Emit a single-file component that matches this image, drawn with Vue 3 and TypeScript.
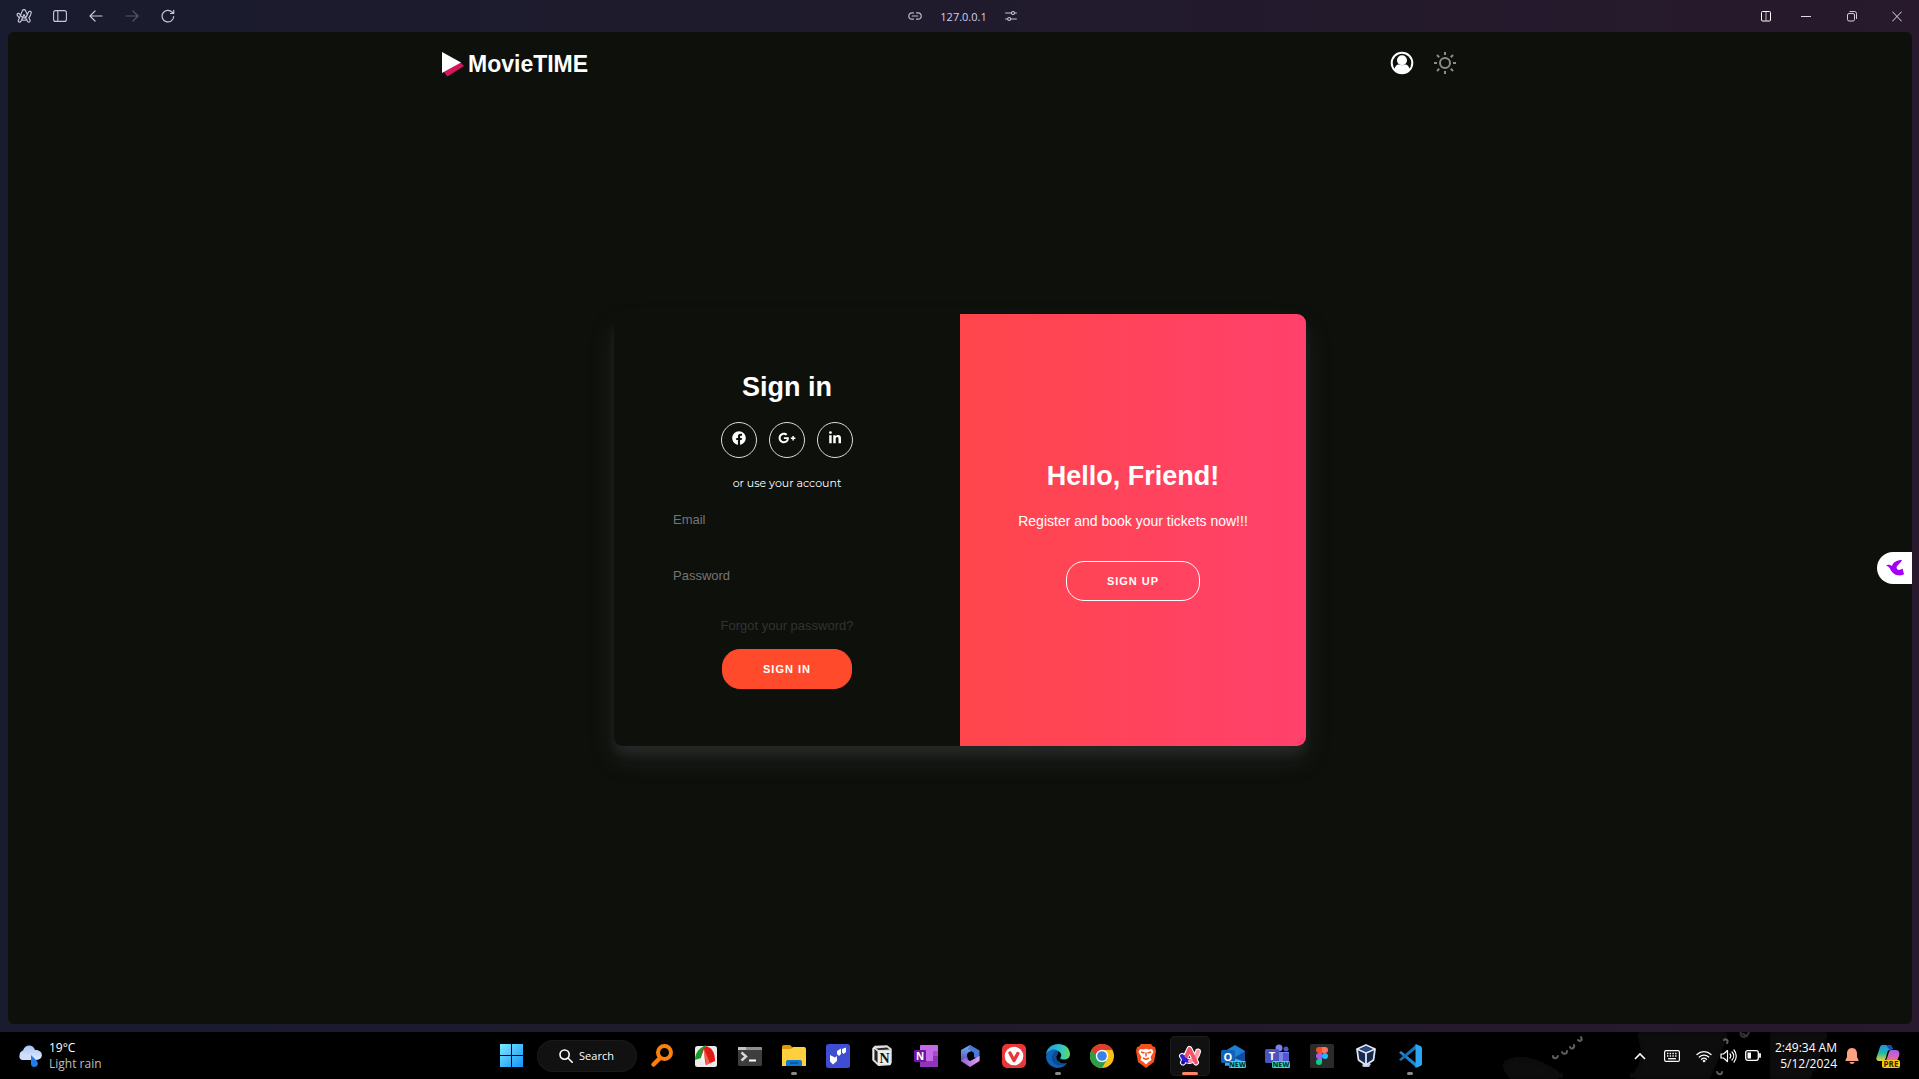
<script setup lang="ts">
import { ref } from 'vue'

const email = ref('')
const password = ref('')
const time = ref('2:49:34 AM')
const date = ref('5/12/2024')
</script>

<template>
  <div class="desktop">
    <header class="titlebar">
      <div class="tools">
        <button class="tool" aria-label="Arc menu">
          <svg width="16" height="14" viewBox="0 0 16 14" fill="none" stroke="#c9c8dc" stroke-width="1.1" stroke-linejoin="round" stroke-linecap="round">
            <path d="M6.500 1.500C7 .3 9 .3 9.500 1.500l1.800 4.200L12.500 3c.6-1.300 3-.7 2.700.8-.4 1.900-1.200 3.500-2.300 4.900l1.200 2.600c.5 1.500-1.700 2.500-2.500 1.100l-.9-1.700c-1.600.6-3.500.6-5 0l-.9 1.700c-.9 1.400-3 .4-2.500-1.100l1.100-2.400C2.500 8 1.800 7.100 1.200 6.100.6 4.700 2.600 3.700 3.500 4.900l1 1.400z" />
            <path d="M4.500 6.300 3.400 8.900M5.700 10.700l1-2.100M9.600 8.600l1.100 2.100M11.300 5.700c-.4 1.100-1 2-1.700 2.900-1 .3-2 .3-2.900 0L8 5.500l1.600 3.100M4.500 6.300c.6 1 1.300 1.800 2.200 2.300" />
          </svg>
        </button>
        <button class="tool" aria-label="Toggle sidebar">
          <svg width="14" height="12" viewBox="0 0 14 12" fill="none" stroke="#c6c5dd" stroke-width="1.100"><rect x=".6" y=".6" width="12.800" height="10.800" rx="2" /><path d="M4.800 1v10" /></svg>
        </button>
        <button class="tool" aria-label="Back">
          <svg width="14" height="12" viewBox="0 0 14 12" fill="none" stroke="#c6c5dd" stroke-width="1.200" stroke-linecap="round" stroke-linejoin="round"><path d="M13 6H1M6 1 1 6l5 5" /></svg>
        </button>
        <button class="tool" aria-label="Forward" disabled>
          <svg width="14" height="12" viewBox="0 0 14 12" fill="none" stroke="#56556a" stroke-width="1.200" stroke-linecap="round" stroke-linejoin="round"><path d="M1 6h12M8 1l5 5-5 5" /></svg>
        </button>
        <button class="tool" aria-label="Reload">
          <svg width="14" height="14" viewBox="0 0 14 14" fill="none" stroke="#c6c5dd" stroke-width="1.200" stroke-linecap="round" stroke-linejoin="round"><path d="M12.700 7.500A5.800 5.800 0 1 1 11 3l1.500 1.300M12.700 1.300v3.200H9.500" /></svg>
        </button>
      </div>
      <div class="address">
        <svg width="14" height="8" viewBox="0 0 14 8" fill="none" stroke="#b9b7cf" stroke-width="1.200" stroke-linecap="round"><path d="M5.500 .8H4a3.200 3.200 0 0 0 0 6.400h1.500M8.500 .8H10a3.200 3.200 0 0 1 0 6.400H8.500M4.200 4h5.600" /></svg>
        <span>127.0.0.1</span>
        <svg width="12" height="12" viewBox="0 0 12 12" fill="none" stroke="#c6c5dd" stroke-width="1.100" stroke-linecap="round"><path d="M.6 3h5.800M9.600 3h1.800M.6 9h2M5.800 9h5.600" /><circle cx="8" cy="3" r="1.500" /><circle cx="4.200" cy="9" r="1.500" /></svg>
      </div>
      <div class="window-buttons">
        <button class="split" aria-label="Split view">
          <svg width="10" height="11" viewBox="0 0 10 11" fill="none" stroke="#fff"><rect x=".5" y=".5" width="9" height="9.500" rx="1" /><path d="M5 1v9" stroke="#bbb" /></svg>
        </button>
        <button aria-label="Minimize"><svg width="10" height="11" viewBox="0 0 10 11"><path d="M0 5.500h10" stroke="#dcd9ef" /></svg></button>
        <button aria-label="Restore"><svg width="10" height="11" viewBox="0 0 10 11" fill="none" stroke="#cfcce2"><rect x=".5" y="2.500" width="7" height="7.500" rx="1.500" /><path d="M2.500 .5H7.500a2 2 0 0 1 2 2v5.500" /></svg></button>
        <button aria-label="Close"><svg width="10" height="11" viewBox="0 0 10 11"><path d="M.3 .6l9.400 9.800M9.700 .6.3 10.400" stroke="#dcd9ef" /></svg></button>
      </div>
    </header>

    <div class="page">
      <nav class="nav">
        <a class="brand" href="#">
          <svg width="22" height="26" viewBox="0 0 22 26"><path d="M2 21 18.500 11.500 22 15 5.500 25.500z" fill="#d9145f" /><path d="M0 1v21l19-10.500z" fill="#fff" /></svg>
          <span>MovieTIME</span>
        </a>
        <div class="nav-actions">
          <button aria-label="Account">
            <svg width="24" height="24" viewBox="0 0 24 24"><circle cx="12" cy="12" r="10.300" fill="none" stroke="#fff" stroke-width="2" /><circle cx="12" cy="9.300" r="5" fill="#fff" /><path d="M4.500 19c0-3.500 2.200-5.500 4.600-5.500 1.700 1.100 4.100 1.100 5.800 0 2.400 0 4.600 2 4.600 5.500-4 4.200-11 4.200-15 0z" fill="#fff" /></svg>
          </button>
          <button aria-label="Toggle theme">
            <svg width="22" height="22" viewBox="0 0 22 22" fill="none" stroke="#8b8d8a" stroke-width="2"><circle cx="11" cy="11" r="5" /><path d="M11 0v3M11 19v3M0 11h3M19 11h3M3 3l2.200 2.200M16.800 16.800 19 19M19 3l-2.200 2.200M5.200 16.800 3 19" /></svg>
          </button>
        </div>
      </nav>

      <main class="content">
        <div class="card">
          <form class="sign-in" @submit.prevent>
            <h1>Sign in</h1>
            <div class="social">
              <a href="#" aria-label="Facebook"><svg width="14" height="14" viewBox="0 0 512 512" fill="#fff"><path d="M504 256C504 119 393 8 256 8S8 119 8 256c0 123.780 90.690 226.380 209.250 245V327.690h-63V256h63v-54.640c0-62.150 37-96.480 93.670-96.480 27.140 0 55.520 4.840 55.520 4.840v61h-31.280c-30.800 0-40.410 19.120-40.410 38.730V256h68.780l-11 71.690h-57.780V501C413.310 482.380 504 379.780 504 256z" /></svg></a>
              <a href="#" aria-label="Google Plus"><svg width="18" height="14" viewBox="0 0 640 512" fill="#fff"><path d="M386.061 228.496c1.834 9.692 3.143 19.384 3.143 31.956C389.204 370.205 315.599 448 204.800 448c-106.084 0-192-85.915-192-192s85.916-192 192-192c51.864 0 95.083 18.859 128.611 50.292l-52.126 50.030c-14.145-13.621-39.028-29.599-76.485-29.599-65.484 0-118.920 54.221-118.920 121.277 0 67.056 53.436 121.277 118.920 121.277 75.961 0 104.513-54.745 108.965-82.773H204.800v-66.009h181.261zm185.406 6.437V179.200h-56.001v55.733h-55.733v56.001h55.733v55.733h56.001v-55.733H627.200v-56.001h-55.733z" /></svg></a>
              <a href="#" aria-label="LinkedIn"><svg width="12" height="14" viewBox="0 0 448 512" fill="#fff"><path d="M100.280 448H7.400V148.900h92.880zM53.790 108.100C24.090 108.100 0 83.500 0 53.800a53.790 53.790 0 0 1 107.580 0c0 29.700-24.100 54.300-53.790 54.300zM447.900 448h-92.680V302.400c0-34.700-.7-79.200-48.290-79.200-48.290 0-55.690 37.700-55.690 76.700V448h-92.780V148.900h89.080v40.800h1.300c12.400-23.500 42.690-48.300 87.880-48.300 94 0 111.280 61.900 111.280 142.300V448z" /></svg></a>
            </div>
            <span class="hint">or use your account</span>
            <input v-model="email" type="email" placeholder="Email" aria-label="Email" />
            <input v-model="password" type="password" placeholder="Password" aria-label="Password" />
            <a class="forgot" href="#">Forgot your password?</a>
            <button class="pill solid">SIGN IN</button>
          </form>
          <section class="welcome">
            <h1>Hello, Friend!</h1>
            <p>Register and book your tickets now!!!</p>
            <button class="pill ghost">SIGN UP</button>
          </section>
        </div>
      </main>

      <button class="side-tab" aria-label="Open extension">
        <svg width="18" height="16" viewBox="0 0 18 16" fill="#a200f4"><path d="M0 5.500C2 4 4.500 4.700 6 6c1-3.600 4.500-6 10-6-.8 2.500-3.500 4.400-5 6.200-1 1.500-.2 3.500 1.800 3.800 1.400.1 2.700-.8 3.700-1.500l1.500 5.500c-1.200 1.300-3.500 1.600-6 1.300C8 14.800 5 11.500 4 8.500 3 7 1.500 5.800 0 5.500z" /></svg>
      </button>
    </div>

    <footer class="taskbar">
      <svg class="wallpaper" width="419" height="47" viewBox="0 0 419 47" fill="none" aria-hidden="true">
        <defs>
          <filter id="soft" x="-50%" y="-50%" width="200%" height="200%"><feGaussianBlur stdDeviation="5" /></filter>
        </defs>
        <g filter="url(#soft)">
          <path d="M0 32c20-15 40-4 60 8 25 6 50 3 75 0V47H10z" fill="#111010" />
          <path d="M135 0c10 20 8 35-10 47h85l20-47z" fill="#0c0b0c" />
          <path d="M270 0h60l-20 47h-40z" fill="#100f10" />
        </g>
        <g stroke="#5f5f5f" stroke-width="2" stroke-linecap="round">
          <path d="M53 24c0 3 4 3 5 0M62 20c1 3 5 2 5-1M70 15c1 3 5 1 4-2M78 8c2 2 5 0 3-3M224 8c2-2 5 1 3 3M217 40c1 3 5 3 5 0" />
          <path d="M241 0c-2 5 5 8 8 0M243 2l4 2" stroke="#333" />
        </g>
      </svg>

      <button class="weather">
        <svg width="24" height="22" viewBox="0 0 24 22">
          <defs><linearGradient id="cloud" x2="0" y2="1"><stop stop-color="#a9c4f5" /><stop offset="1" stop-color="#e3ecfd" /></linearGradient></defs>
          <path d="M5 15a5 5 0 0 1 0-9.500C7-1 15-1 17 5c9-.5 9 10 1 10z" fill="url(#cloud)" />
          <path d="M1.500 12c0-4 6-5 8-1 2-1 4 1 3 4H5c-2 0-3.500-1-3.500-3z" fill="#cfdffb" />
          <path d="M13 10c3 3 7 6 7 9-1 4-7 4-7 0z" fill="#1f7df2" />
        </svg>
        <span class="lines"><b>19°C</b><span>Light rain</span></span>
      </button>

      <div class="apps">
        <button class="app" aria-label="Start">
          <svg width="23" height="23" viewBox="0 0 23 23"><defs><linearGradient id="win" x2="1" y2="1"><stop stop-color="#7de9ff" /><stop offset="1" stop-color="#0f93f8" /></linearGradient></defs><path d="M0 0h11v11H0zM12 0h11v11H12zM0 12h11v11H0zM12 12h11v11H12z" fill="url(#win)" /></svg>
        </button>
        <button class="search">
          <svg width="14" height="14" viewBox="0 0 14 14" fill="none" stroke="#fff" stroke-width="1.600" stroke-linecap="round"><circle cx="5.600" cy="5.600" r="4.600" /><path d="m9.200 9.200 4 4" /></svg>
          <span>Search</span>
        </button>
        <button class="app" aria-label="Everything">
          <svg width="24" height="24" viewBox="0 0 24 24" fill="none" stroke="#ff7f0a"><circle cx="14.500" cy="8.500" r="6.500" stroke-width="4" /><path d="M10 14 3.500 20.500" stroke-width="4.500" stroke-linecap="round" /></svg>
        </button>
        <button class="app" aria-label="FastStone Capture">
          <svg width="24" height="24" viewBox="0 0 24 24"><rect x="1" y="2" width="22" height="21" rx="2.500" fill="#ececec" /><path d="M12 1C5 4 1 9 1 16l6-2 3-8z" fill="#1c9a29" /><path d="M12 2c7 2 9 8 9 15l-9 4-4-14z" fill="#e01a14" /><path d="m10 5 2 16 4-2z" fill="#f56050" /><path d="M10 5 7 14l4 6z" fill="#f8f8f8" /></svg>
        </button>
        <button class="app" aria-label="Terminal">
          <svg width="24" height="20" viewBox="0 0 24 20"><rect width="24" height="19" y="1" rx="1.500" fill="#3d3e40" /><path d="M0 4V2a1 1 0 0 1 1-1h22a1 1 0 0 1 1 1v2z" fill="#8d8f92" /><path d="M0 4V2a1 1 0 0 1 1-1h7v3z" fill="#c3c4c6" /><path d="m3.500 6.500 4.500 4-4.500 4" fill="none" stroke="#d8d8d8" stroke-width="2.400" /><path d="M11 14.500h7" stroke="#fff" stroke-width="2" /></svg>
        </button>
        <button class="app running" aria-label="File Explorer">
          <svg width="24" height="21" viewBox="0 0 24 21"><path d="M0 2a2 2 0 0 1 2-2h6l3 3v5H0z" fill="#dd9a08" /><path d="M0 4h9l2-2h11a2 2 0 0 1 2 2v17H0z" fill="#ffcf3f" /><path d="M4 21v-4a2 2 0 0 1 2-2h12a2 2 0 0 1 2 2v4z" fill="#1277d1" /><path d="M8 18h8" stroke="#0a4f94" stroke-width="1.500" /></svg>
        </button>
        <button class="app" aria-label="Metro app">
          <svg width="24" height="24" viewBox="0 0 24 24"><rect width="24" height="24" rx="2.500" fill="#3e4dd1" /><path d="m4 11 5 2.500L11 12v5l-4 3.500-3-3zM11 7l4-2.500V10l-2 2-2-2zM16 5l4-1.500V8l-2.500 2L16 8.500z" fill="#fff" /></svg>
        </button>
        <button class="app" aria-label="Notion">
          <svg width="20" height="21" viewBox="0 0 20 21"><path d="M1 3.500 3 1.500 15 1l4 3v13.500l-1 2-11.500.8L1 15z" fill="#ddd" stroke="#ddd" stroke-width="1.500" stroke-linejoin="round" /><path d="m2 3 4 3.500v12.500L2 14.500z" fill="#222" stroke="#fff" stroke-width=".8" /><path d="M4 3.500 15 2.500l2.500 2L6.500 5z" fill="#222" /><rect x="6.500" y="6" width="12" height="13.500" fill="#eee" /><text x="12.500" y="17.500" text-anchor="middle" font-family="Liberation Serif, serif" font-size="14" font-weight="700" fill="#111">N</text></svg>
        </button>
        <button class="app" aria-label="OneNote">
          <svg width="24" height="22" viewBox="0 0 24 22"><rect x="6" width="18" height="22" rx="1" fill="#c56ae6" /><path d="M19 6h5v5h-5z" fill="#a94bd0" /><path d="M19 11h5v5h-5z" fill="#8a33b4" /><path d="M6 16h18v5a1 1 0 0 1-1 1H7a1 1 0 0 1-1-1z" fill="#9133bd" /><rect y="5" width="12" height="12" rx="1" fill="#6f17a3" /><text x="6" y="15" text-anchor="middle" font-family="Open Sans, sans-serif" font-size="10" font-weight="700" fill="#fff">N</text></svg>
        </button>
        <button class="app" aria-label="Microsoft 365">
          <svg width="22" height="24" viewBox="0 0 22 24"><defs><linearGradient id="m1" x2="0" y2="1"><stop stop-color="#6fb8f5" /><stop offset="1" stop-color="#5a3fae" /></linearGradient><linearGradient id="m2"><stop stop-color="#8f5fd8" /><stop offset="1" stop-color="#e5a0f0" /></linearGradient></defs><path d="M11 1 2 6v11l3 2 4-4V9l5-3z" fill="url(#m1)" /><path d="m11 1 9.500 5.500V16L15 13V9L9 5z" fill="#4a78d8" /><path d="M2 17l9 6 9.500-6v-5L11 17l-5-3z" fill="url(#m2)" /><circle cx="11.500" cy="11.500" r="3.500" fill="#000" /></svg>
        </button>
        <button class="app" aria-label="Vivaldi">
          <svg width="24" height="24" viewBox="0 0 24 24"><rect width="24" height="24" rx="5" fill="#ea3639" /><circle cx="12" cy="12" r="9.300" fill="#fff" /><path d="m8 9 4 7.500 3.800-7" fill="none" stroke="#ea3639" stroke-width="3.400" stroke-linecap="round" stroke-linejoin="round" /></svg>
        </button>
        <button class="app running" aria-label="Edge">
          <svg width="24" height="24" viewBox="0 0 24 24"><defs><linearGradient id="e1"><stop stop-color="#1b9de2" /><stop offset=".6" stop-color="#2fc3c9" /><stop offset="1" stop-color="#5fdc5a" /></linearGradient></defs><path d="M0 11C1-4 24-3 24 10c0 5-5 6.500-9 5-2-1 1-2 0-5C13 5 3 5 0 11z" fill="url(#e1)" /><path d="M0 12C2 5 9 4 12 7c-4 0-5 4-4 8 1 4 6 7 13 4-6 9-21 5-21-7z" fill="#1064b8" /><path d="M12 7c-5 0-8 6-5 11 3 5 10 4 14 1-5 1-10-1-10.500-5-.3-3 1.500-3.500 1.500-4z" fill="#0b4c93" /></svg>
        </button>
        <button class="app" aria-label="Chrome">
          <svg width="24" height="24" viewBox="0 0 24 24"><circle cx="12" cy="12" r="12" fill="#fbc116" /><path d="M1.600 6A12 12 0 0 1 22.400 6H12L7 15z" fill="#e33b2e" /><path d="M1.600 6A12 12 0 0 0 12 24l5.200-9-5.200-3H6.800z" fill="#2b9e48" /><circle cx="12" cy="12" r="6.200" fill="#fff" /><circle cx="12" cy="12" r="4.800" fill="#3f7fe8" /></svg>
        </button>
        <button class="app" aria-label="Brave">
          <svg width="20" height="24" viewBox="0 0 20 24"><path d="M5 0h10l2 2.500 2 .5 1 4-2 11-8 6-8-6L0 7l1-4 2-.5z" fill="#f4511e" /><path d="m4 5 3 .5 3-.8 3 .8 3-.5 1.500 3-3 5 1 3-3 2-2.500 2.500L7.500 18l-3-2 1-3-3-5z" fill="#fff" /><path d="m5 8 3.500 1M15 8l-3.500 1M10 8.500v4M7 14l3 1.500 3-1.500" stroke="#f4511e" stroke-width="1.500" fill="none" /></svg>
        </button>
        <button class="app active" aria-label="Arc">
          <svg width="24" height="22" viewBox="0 0 24 22" stroke-linecap="round" stroke-linejoin="round" fill="none"><path d="M5 17.500 11.500 4 18 17.500M4 11c2 3.500 4.500 5 7.500 5 4.500-.5 7.500-5 8.500-9.500" stroke="#fff" stroke-width="6" /><path d="M5 17.500 7.500 12" stroke="#1908a8" stroke-width="4" /><path d="M4 11c2 3.500 4.500 5 7.500 5" stroke="#2b1fd8" stroke-width="4" /><path d="M12 16c4-.8 7-5 8-9.500" stroke="#fb9aa4" stroke-width="4" /><path d="m8.500 11 3-7L18 17.500" stroke="#f4516c" stroke-width="4" /></svg>
        </button>
        <button class="app" aria-label="Outlook">
          <svg width="25" height="24" viewBox="0 0 25 24"><path d="M4 7 14 1l10 6v15H4z" fill="#1e7fd6" /><path d="m4 9 10 5 10-7v14H4z" fill="#43a5ee" /><path d="m13 14 11-7v11z" fill="#0d4f9e" /><rect y="6" width="14" height="13" rx="1.500" fill="#0f62b8" /><text x="7" y="16.500" text-anchor="middle" font-family="Open Sans, sans-serif" font-size="11" font-weight="700" fill="#fff">O</text><rect x="8" y="17" width="17" height="7" rx="1.500" fill="#33dedb" /><text x="16.500" y="23" text-anchor="middle" font-family="Open Sans, sans-serif" font-size="7" font-weight="800" fill="#06383d">NEW</text></svg>
        </button>
        <button class="app" aria-label="Teams">
          <svg width="25" height="24" viewBox="0 0 25 24"><circle cx="14" cy="4" r="3.500" fill="#7b83eb" /><circle cx="21" cy="5" r="2.500" fill="#5059c9" /><path d="M10 8h14v12H10z" fill="#7b83eb" /><path d="M18 9h6v10h-6z" fill="#5059c9" /><rect y="5" width="14" height="14" rx="1.500" fill="#4b53bc" /><text x="7" y="16" text-anchor="middle" font-family="Open Sans, sans-serif" font-size="11" font-weight="700" fill="#fff">T</text><rect x="7" y="17" width="18" height="7" rx="1.500" fill="#33dedb" /><text x="16" y="23" text-anchor="middle" font-family="Open Sans, sans-serif" font-size="7" font-weight="800" fill="#06383d">NEW</text></svg>
        </button>
        <button class="app" aria-label="Figma">
          <svg width="24" height="24" viewBox="0 0 24 24"><rect width="24" height="24" rx="1.500" fill="#2b2b2b" /><path d="M12 3H9a3 3 0 0 0 0 6h3z" fill="#f24e1e" /><path d="M12 3h3a3 3 0 0 1 0 6h-3z" fill="#ff7262" /><path d="M12 9H9a3 3 0 0 0 0 6h3z" fill="#a259ff" /><circle cx="15" cy="12" r="3" fill="#1abcfe" /><path d="M12 15H9a3 3 0 1 0 3 3z" fill="#0acf83" /></svg>
        </button>
        <button class="app" aria-label="VirtualBox">
          <svg width="22" height="24" viewBox="0 0 22 24" stroke-linejoin="round"><path d="m7 21 4-3 5 2-2 3H8z" fill="#b9c3da" /><path d="m11 1 9 4-1.500 11L11 21l-7.500-5L2 5z" fill="#16294f" stroke="#dfe6f4" stroke-width="1.800" /><path d="m2 5 9 4 9-4M11 9v12" fill="none" stroke="#dfe6f4" stroke-width="1.800" /><path d="m5 5 6-2.500L17 5l-6 2.500z" fill="#2b4a86" /></svg>
        </button>
        <button class="app running" aria-label="Visual Studio Code">
          <svg width="24" height="24" viewBox="0 0 24 24"><path d="m1 8.500 2-1.500L18 19v4.500z" fill="#1f86cf" /><path d="M1 15.500 3 17 18 5V.5z" fill="#1173b8" /><path d="m17.500 0 5 2 1.500 1.500v17L22.500 22l-5 2z" fill="#2aa6f2" /></svg>
        </button>
      </div>

      <div class="tray">
        <button aria-label="Show hidden icons"><svg width="12" height="8" viewBox="0 0 12 8" fill="none" stroke="#fff" stroke-width="1.600"><path d="m1 7 5-5 5 5" /></svg></button>
        <button class="keyboard" aria-label="Touch keyboard"><svg width="16" height="12" viewBox="0 0 16 12" fill="none" stroke="#fff"><rect x=".6" y=".6" width="14.800" height="10.800" rx="1.500" stroke-width="1.200" /><path d="M3 3.500h10M3 6h10" stroke-width="1.300" stroke-dasharray="1.400 1.300" /><path d="M4 8.700h8" stroke-width="1.300" /></svg></button>
        <button class="status" aria-label="Network, volume and battery">
          <svg width="16" height="14" viewBox="0 0 16 14" fill="none" stroke="#fff" stroke-width="1.300" stroke-linecap="round"><path d="M1 5.500a10 10 0 0 1 14 0M3.300 8a6.700 6.700 0 0 1 9.400 0M5.500 10.300a3.600 3.600 0 0 1 5 0" /><circle cx="8" cy="12" r="1" fill="#fff" stroke-width=".6" /></svg>
          <svg width="17" height="14" viewBox="0 0 17 14" fill="none" stroke="#fff" stroke-width="1.200" stroke-linecap="round" stroke-linejoin="round"><path d="M1 5v4h2.500L7.500 12.500v-11L3.500 5zM10 5c1 1.200 1 2.800 0 4M12 3c2.200 2.300 2.200 5.700 0 8M14 1c3 3.500 3 8.500 0 12" /></svg>
          <svg width="16" height="11" viewBox="0 0 16 11" fill="none" stroke="#fff"><rect x=".7" y=".7" width="12.600" height="9.600" rx="2" stroke-width="1.300" /><rect x="2.500" y="2.500" width="3.500" height="6" fill="#fff" stroke="none" /><path d="M15 4v3" stroke-width="1.800" stroke-linecap="round" /></svg>
        </button>
        <button class="clock lines"><span>{{ time }}</span><span>{{ date }}</span></button>
        <button class="bell" aria-label="Notifications"><svg width="14" height="16" viewBox="0 0 14 16" fill="#fda184"><path d="M7 0C3.500 0 2 3 2 5.500V9L.5 12v1h13v-1L12 9V5.500C12 3 10.500 0 7 0zM4.500 14h5C9 16.500 5 16.500 4.500 14z" /></svg></button>
        <button aria-label="Copilot">
          <svg width="24" height="24" viewBox="0 0 24 24"><defs><linearGradient id="c1" x2="0" y2="1"><stop stop-color="#1b8fe8" /><stop offset=".5" stop-color="#27b7a2" /><stop offset="1" stop-color="#e9d53a" /></linearGradient><linearGradient id="c2" x2="0" y2="1"><stop stop-color="#a45ff0" /><stop offset="1" stop-color="#f56a8c" /></linearGradient></defs><path d="M6 1h8c2 0 2 3 3 4l-4 1c-3 1-2 11-6 11H3c-3 0-3-3-2-5L4 3c.5-1 1-2 2-2z" fill="url(#c1)" /><path d="M10 1h4c2 0 2 3 3 4h-4z" fill="#1649b8" /><path d="M15 6h5c3 0 4 3 3 6l-2 5H9c3-1 3-11 6-11z" fill="url(#c2)" /><rect x="6" y="16" width="18" height="8" rx="2" fill="#fbcb11" /><text x="15" y="23" text-anchor="middle" font-family="Open Sans, sans-serif" font-size="8" font-weight="700" fill="#302500">PRE</text></svg>
        </button>
      </div>
    </footer>
  </div>
</template>

<style>
body {
  margin: 0;
  background: #1d1b2c;
}
</style>

<style scoped>
.desktop {
  display: flex;
  flex-direction: column;
  min-height: 100vh;
  background: linear-gradient(to right, #191b2e, #201b2c 50%, #28192c);
  font-family: "Liberation Sans", Arial, sans-serif;
  color: #fff;
}
button {
  margin: 0;
  padding: 0;
  border: 0;
  background: none;
  color: inherit;
  font-family: inherit;
}
a {
  color: inherit;
  text-decoration: none;
}
svg {
  display: block;
  flex: none;
}

/* browser chrome */
.titlebar {
  display: grid;
  grid-template-columns: 1fr auto 1fr;
  align-items: center;
  height: 32px;
}
.tools {
  display: flex;
  padding-left: 6px;
}
.tool {
  display: grid;
  place-items: center;
  width: 36px;
  height: 32px;
}
.address {
  display: flex;
  align-items: center;
  gap: 18px;
  padding-left: 6px;
  font-family: "Open Sans", "Noto Sans", sans-serif;
  font-size: 11px;
  color: #d2d0e6;
}
.window-buttons {
  display: flex;
  justify-content: flex-end;
}
.window-buttons button {
  display: grid;
  place-items: center;
  width: 46px;
  height: 32px;
}
.window-buttons button:last-child {
  width: 44px;
}
.window-buttons .split {
  width: 34px;
}

/* web page */
.page {
  position: relative;
  display: flex;
  flex: 1;
  flex-direction: column;
  margin: 0 7px 8px 8px;
  border-radius: 6px;
  background: #0d100b;
}
.nav {
  display: flex;
  align-items: center;
  justify-content: space-between;
  box-sizing: border-box;
  width: 100%;
  max-width: 1036px;
  height: 64px;
  margin: 0 auto;
  padding-right: 22px;
}
.brand {
  display: flex;
  align-items: center;
  gap: 4px;
  font-size: 23px;
  font-weight: 700;
}
.nav-actions {
  display: flex;
  align-items: center;
  gap: 20px;
  padding-bottom: 2px;
}
.content {
  display: flex;
  flex: 1;
  align-items: center;
  justify-content: center;
  padding-bottom: 60px;
}
.card {
  display: grid;
  grid-template-columns: 1fr 1fr;
  width: 692px;
  max-width: 100%;
  min-height: 432px;
  border-radius: 9px;
  background: #0d100b;
  box-shadow: 0 13px 25px rgba(84, 84, 88, 0.25), 0 9px 9px rgba(74, 74, 78, 0.22);
  overflow: hidden;
}
.sign-in,
.welcome {
  display: flex;
  flex-direction: column;
  align-items: center;
  justify-content: center;
  padding: 0 45px;
  text-align: center;
}
.welcome {
  padding: 2px 36px 0;
  background: linear-gradient(to right, #ff464b, #ff416c);
}
h1 {
  margin: 0;
  font-size: 27px;
  line-height: 31px;
}
.social {
  display: flex;
  gap: 12px;
  margin: 19px 0;
}
.social a {
  display: flex;
  justify-content: center;
  box-sizing: border-box;
  width: 36px;
  height: 36px;
  padding-top: 8px;
  border: 1px solid #ddd;
  border-radius: 50%;
}
.hint {
  margin-bottom: 3px;
  font-family: Montserrat, Inter, sans-serif;
  font-size: 11px;
  line-height: 12px;
}
input {
  box-sizing: border-box;
  width: 100%;
  height: 36px;
  margin: 10px 0;
  padding: 0 14px;
  border: 0;
  outline: 0;
  background: transparent;
  color: #fff;
  font-family: inherit;
  font-size: 13px;
}
input::placeholder {
  color: #757575;
}
.forgot {
  margin: 13px 0 14px;
  color: #333;
  font-size: 13px;
  line-height: 18px;
}
.welcome p {
  margin: 20px 0 31px;
  font-size: 14px;
  line-height: 18px;
}
.pill {
  box-sizing: border-box;
  height: 40px;
  padding: 0 40px;
  border: 1px solid #ff4b2b;
  border-radius: 18px;
  font-size: 11px;
  font-weight: 700;
  letter-spacing: 1px;
}
.solid {
  background: #ff4b2b;
}
.ghost {
  border-color: #fff;
}
.side-tab {
  position: absolute;
  top: 520px;
  right: 0;
  display: flex;
  align-items: center;
  width: 35px;
  height: 32px;
  padding-left: 9px;
  border-radius: 16px 0 0 16px;
  background: #fff;
}

/* taskbar */
.taskbar {
  position: relative;
  display: grid;
  grid-template-columns: 1fr auto 1fr;
  align-items: center;
  height: 47px;
  background: #000;
  font-family: "Open Sans", "Noto Sans", sans-serif;
  font-size: 11px;
}
.wallpaper {
  position: absolute;
  top: 0;
  right: 0;
}
.weather {
  display: flex;
  align-items: center;
  gap: 7px;
  padding-left: 18px;
}
.lines {
  display: flex;
  flex-direction: column;
  font-size: 12px;
  line-height: 16px;
  text-align: left;
}
.weather .lines {
  color: #bdbdbd;
}
.weather b {
  color: #fff;
  font-weight: 400;
}
.apps {
  display: flex;
  align-items: center;
  padding-left: 2px;
}
.app {
  position: relative;
  display: grid;
  place-items: center;
  width: 40px;
  height: 40px;
  margin: 0 2px;
  border-radius: 5px;
}
.active {
  background: #111;
  box-shadow: inset 0 0 0 1px #1c1c1c;
}
.running::after,
.active::after {
  position: absolute;
  bottom: 1px;
  left: 17px;
  width: 6px;
  height: 3px;
  border-radius: 2px;
  background: #8b8b8b;
  content: "";
}
.active::after {
  left: 12px;
  width: 16px;
  background: #ff8567;
}
.search {
  display: flex;
  align-items: center;
  justify-content: center;
  gap: 6px;
  width: 100px;
  height: 32px;
  margin: 0 3px;
  border-radius: 16px;
  background: #111;
  box-shadow: inset 0 0 0 1px #191919;
  font-size: 11px;
}
.tray {
  position: relative;
  display: flex;
  align-items: center;
  justify-content: flex-end;
  padding-right: 19px;
}
.keyboard {
  margin: 0 16px 0 18px;
}
.status {
  display: flex;
  align-items: center;
  gap: 8px;
}
.clock {
  margin-left: 14px;
  text-align: right;
}
.bell {
  margin: 0 17px 0 8px;
}
</style>
